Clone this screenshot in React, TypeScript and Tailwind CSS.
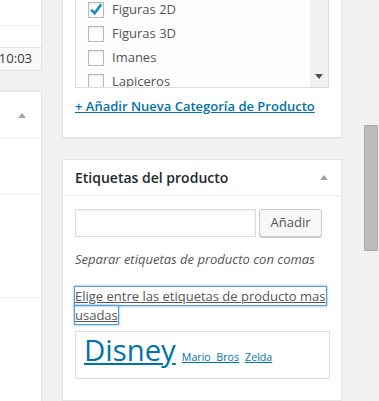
import React from 'react';

function Arrow({ down = false }: { down?: boolean }) {
  return (
    <svg width="8" height="5" viewBox="0 0 8 5" className="block">
      {down ? (
        <polygon points="0,0 8,0 4,5" fill="#505050" />
      ) : (
        <polygon points="0,5 8,5 4,0" fill="#a0a5aa" />
      )}
    </svg>
  );
}

function Checkbox({ checked = false }: { checked?: boolean }) {
  return (
    <span className="relative w-4 h-4 shrink-0 border border-[#b4b9be] bg-white shadow-[inset_0_1px_2px_rgba(0,0,0,0.1)]">
      {checked && (
        <svg width="16" height="16" viewBox="0 0 16 16" className="absolute -left-px -top-px">
          <path d="M3.2 7.6 L6.6 11.2 L13.2 2.4" fill="none" stroke="#1e8cbe" strokeWidth="2.6" />
        </svg>
      )}
    </span>
  );
}

const categories = [
  { name: 'Figuras 2D', checked: true },
  { name: 'Figuras 3D', checked: false },
  { name: 'Imanes', checked: false },
  { name: 'Lapiceros', checked: false },
];

export default function App() {
  return (
    <div className="w-[379px] h-[401px] overflow-hidden bg-[#f1f1f1] flex font-['Open_Sans','Liberation_Sans',sans-serif] text-[13px] text-[#444]">
      {/* left column (cut off) */}
      <div className="w-[42px] shrink-0 flex flex-col">
        <div className="bg-white border-r border-b border-[#e5e5e5]">
          <div className="h-[26px] border-b border-[#eee]" />
          <div className="h-[21px]" />
          <div className="h-[23px] border-t border-[#e5e5e5] bg-[#f9f9f9] flex items-center justify-end pr-[9px] text-[#32373c]">
            10:03
          </div>
        </div>
        <div className="mt-[20px] flex-1 bg-white border-t border-r border-[#e5e5e5]">
          <div className="h-[47px] border-b border-[#eee] flex items-center justify-end pr-[15px]">
            <Arrow />
          </div>
          <div className="h-[56px] border-b border-[#eee]" />
          <div className="h-[103px] border-b border-[#eee]" />
        </div>
      </div>

      {/* main column */}
      <div className="ml-[20px] w-[280px] shrink-0 flex flex-col">
        {/* categories panel */}
        <div className="h-[138px] bg-white border-x border-b border-[#e5e5e5] shadow-[0_1px_1px_rgba(0,0,0,0.04)] px-[12px]">
          <div className="h-[88px] border-x border-b border-[#ddd] bg-[#fdfdfd] overflow-hidden flex">
            <div className="flex-1 flex flex-col pl-[12px] -mt-[2px]">
              {categories.map((c) => (
                <label key={c.name} className="h-[24px] shrink-0 flex items-center gap-[8px] text-[#555]">
                  <Checkbox checked={c.checked} />
                  <span>{c.name}</span>
                </label>
              ))}
            </div>
            <div className="w-[18px] bg-[#f1f1f1] flex flex-col justify-end items-center pb-[8px]">
              <Arrow down />
            </div>
          </div>
          <a className="block mt-[9px] leading-[19.5px] font-semibold text-[#0073aa] underline">
            + Añadir Nueva Categoría de Producto
          </a>
        </div>

        {/* tags panel */}
        <div className="mt-[21px] flex-1 bg-white border border-[#e5e5e5] shadow-[0_1px_1px_rgba(0,0,0,0.04)]">
          <div className="h-[36px] border-b border-[#eee] flex items-center justify-between pl-[12px] pr-[13px]">
            <h2 className="text-[14px] leading-[19.6px] font-semibold text-[#23282d]">Etiquetas del producto</h2>
            <Arrow />
          </div>
          <div className="px-[12px] pt-[13px]">
            <div className="flex gap-[3px]">
              <input className="w-[181px] h-[28px] border border-[#ddd] shadow-[inset_0_1px_2px_rgba(0,0,0,0.07)] bg-white outline-none" />
              <button className="w-[63px] h-[28px] border border-[#ccc] rounded-[3px] bg-[#f7f7f7] text-[#555] shadow-[0_1px_0_#ccc]">
                Añadir
              </button>
            </div>
            <p className="mt-[13px] leading-[19.5px] italic text-[#555]">
              Separar etiquetas de producto con comas
            </p>
            <p className="mt-[17px] leading-[19px]">
              <a className="text-[#555] underline shadow-[0_0_0_1px_#5b9dd9,0_0_2px_1px_rgba(30,140,190,0.8)] [box-decoration-break:clone]">
                Elige entre las etiquetas de producto mas usadas
              </a>
            </p>
            <div className="mt-[6px] w-[255px] h-[48px] border border-[#ddd] flex items-baseline gap-[6px] px-[8px] pt-[4px] leading-none">
              <a className="text-[29.33px] text-[#0073aa] underline">Disney</a>
              <a className="text-[10.67px] text-[#0073aa] underline whitespace-pre">{'Mario  Bros'}</a>
              <a className="text-[10.67px] text-[#0073aa] underline">Zelda</a>
            </div>
          </div>
        </div>
      </div>

      {/* page scrollbar */}
      <div className="flex-1 pl-[22px] pt-[125px]">
        <div className="w-[14px] h-[126px] bg-[#bcbcbc] border border-[#a9a9a9]" />
      </div>
    </div>
  );
}
